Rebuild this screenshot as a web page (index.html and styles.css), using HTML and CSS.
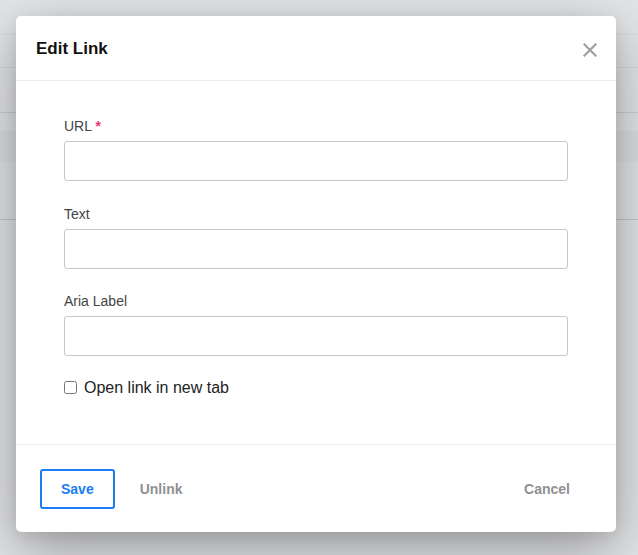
FILE: index.html
```html
<!DOCTYPE html>
<html>
<head>
<meta charset="utf-8">
<link rel="stylesheet" href="styles.css">
</head>
<body>
<div class="page">
  <div class="row r1"></div>
  <div class="row r2"></div>
  <div class="row r3"></div>
  <div class="row r4"></div>
  <div class="row band"></div>
  <div class="row r5"></div>
</div>
<div class="modal">
  <div class="modal-header">
    <h2 class="title">Edit Link</h2>
    <button class="close" aria-label="Close">
      <svg width="14" height="14" viewBox="0 0 14 14"><path d="M1.5 1.5 L12.5 12.5 M12.5 1.5 L1.5 12.5" stroke="#a0a0a0" stroke-width="2.2" stroke-linecap="square" fill="none"/></svg>
    </button>
  </div>
  <div class="modal-body">
    <div class="field">
      <label class="label">URL <span class="req">*</span></label>
      <input class="input" type="text">
    </div>
    <div class="field">
      <label class="label">Text</label>
      <input class="input" type="text">
    </div>
    <div class="field">
      <label class="label">Aria Label</label>
      <input class="input" type="text">
    </div>
    <label class="check"><input type="checkbox" class="cb"><span>Open link in new tab</span></label>
  </div>
  <div class="modal-footer">
    <button class="btn btn-primary">Save</button>
    <button class="btn btn-link">Unlink</button>
    <button class="btn btn-link cancel">Cancel</button>
  </div>
</div>
</body>
</html>
```

FILE: styles.css
```css
html, body {
  margin: 0;
  padding: 0;
  height: 100%;
}
body {
  background: #e4e5e7;
  font-family: "Liberation Sans", Arial, sans-serif;
  overflow: hidden;
  position: relative;
}
.page {
  display: flex;
  flex-direction: column;
}
.row {
  border-bottom: 1px solid rgba(0, 0, 0, 0.05);
}
.r1 { height: 34px; border-bottom-color: rgba(0, 0, 0, 0.03); }
.r2 { height: 32px; }
.r3 { height: 44px; border-bottom-color: rgba(40, 50, 60, 0.12); }
.r4 { height: 18px; border-bottom: none; }
.band { height: 31px; background: rgba(0, 0, 0, 0.025); border-bottom: none; }
.r5 { height: 57px; border-bottom-color: rgba(40, 60, 70, 0.16); }

.modal {
  position: absolute;
  left: 16px;
  top: 16px;
  width: 600px;
  background: #fff;
  border-radius: 5px;
  box-shadow: 0 18px 60px rgba(0, 0, 0, 0.34), 0 4px 14px rgba(0, 0, 0, 0.08);
  display: flex;
  flex-direction: column;
}
.modal-header {
  height: 64px;
  border-bottom: 1px solid #ececec;
  display: flex;
  align-items: center;
  justify-content: space-between;
  padding: 0 19px 0 20px;
}
.title {
  margin: 0;
  font-size: 17px;
  font-weight: bold;
  color: #111;
  padding-top: 1px;
}
.close {
  border: none;
  background: none;
  padding: 0;
  width: 14px;
  height: 14px;
  margin-top: 3px;
  display: flex;
}
.modal-body {
  padding: 35px 48px 47px;
  display: flex;
  flex-direction: column;
}
.field {
  display: flex;
  flex-direction: column;
  margin-bottom: 22.5px;
}
.label {
  font-size: 14px;
  line-height: 20px;
  color: #444;
  margin-bottom: 5px;
}
.req {
  color: #f2336b;
  font-weight: bold;
}
.input {
  box-sizing: border-box;
  height: 40px;
  width: 100%;
  border: 1px solid #c4c8cc;
  border-radius: 3px;
  margin: 0;
  padding: 0 10px;
  font-size: 14px;
  background: #fff;
}
.check {
  display: flex;
  align-items: center;
  font-size: 16px;
  line-height: 20px;
  color: #222;
  margin-top: -1px;
  margin-bottom: -1px;
}
.cb {
  width: 13px;
  height: 13px;
  margin: 0 7px 0 0;
}
.modal-footer {
  border-top: 1px solid #ececec;
  padding: 24px 25px 23px 24px;
  display: flex;
  align-items: center;
}
.btn {
  height: 40px;
  box-sizing: border-box;
  border: 2px solid transparent;
  border-radius: 3px;
  background: none;
  padding: 0 19px;
  font-family: "Liberation Sans", Arial, sans-serif;
  font-size: 14px;
  font-weight: bold;
  cursor: pointer;
}
.btn-primary {
  border-color: #1a7ef2;
  color: #1a7ef2;
  margin-right: 4px;
}
.btn-link {
  color: #909090;
}
.cancel {
  margin-left: auto;
}
```
